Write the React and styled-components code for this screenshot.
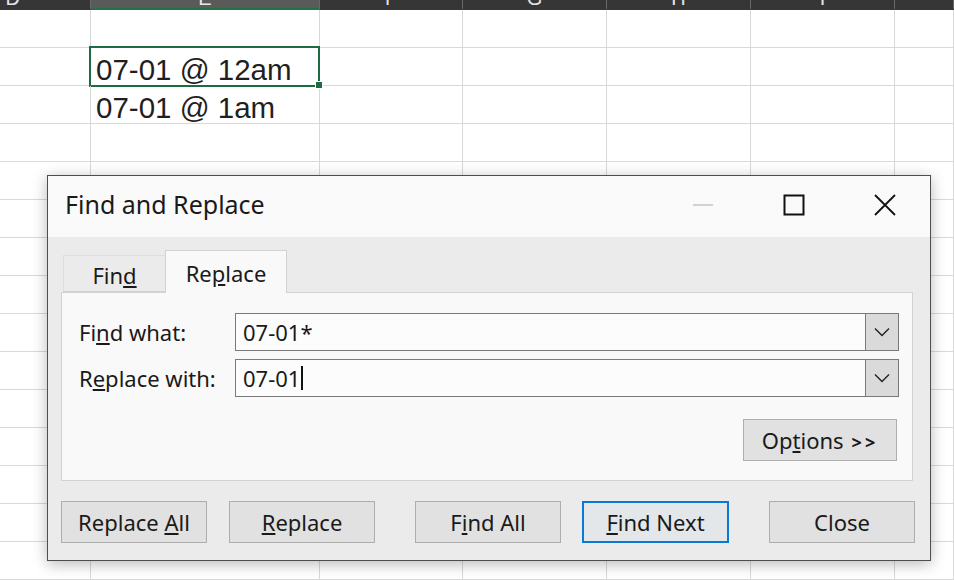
import React from 'react'
import styled, { createGlobalStyle } from 'styled-components'

const GlobalStyle = createGlobalStyle`
    html, body {
        margin: 0;
        padding: 0;
        background: #fff;
    }
`

const Page = styled.div`
    position: relative;
    width: 954px;
    height: 580px;
    overflow: hidden;
    background: #fff;
`

const Sheet = styled.div`
    display: grid;
    grid-template-columns: 91px 229px 143px 144px 144px 144px 59px;
    grid-template-rows: 10px repeat(15, 38px);
`

const HeadCell = styled.div`
    background: ${p => (p.active ? '#5a5a5a' : '#363636')};
    border-right: 1px solid #6a6a6a;
    border-bottom: 2px solid ${p => (p.active ? '#217346' : '#363636')};
    box-sizing: border-box;
    overflow: hidden;
    display: flex;
    align-items: flex-end;
    justify-content: ${p => (p.edge ? 'flex-end' : 'center')};
    padding-right: ${p => (p.edge ? '70px' : '0')};
    color: #e6e6e6;
    font-family: "Liberation Sans", Arial, sans-serif;
    font-size: 20px;
    line-height: 20px;
`

const Cell = styled.div`
    position: relative;
    box-sizing: border-box;
    border-right: 1px solid #d9d9d9;
    border-bottom: 1px solid #d9d9d9;
    display: flex;
    align-items: flex-end;
    padding: 0 0 0 5px;
    font-family: "Liberation Sans", Arial, sans-serif;
    font-size: 29.5px;
    line-height: 30px;
    color: #1f1f1f;
    white-space: nowrap;

    ${p => p.selected && `
        &::after {
            content: '';
            position: absolute;
            left: -2px;
            top: -2px;
            right: -1px;
            bottom: -2px;
            border: 2px solid #1e6b41;
        }
        &::before {
            content: '';
            position: absolute;
            right: -4px;
            bottom: -4px;
            width: 6px;
            height: 6px;
            background: #1e6b41;
            border: 1px solid #fff;
            z-index: 1;
        }
    `}
`

const Dialog = styled.div`
    position: absolute;
    left: 47px;
    top: 175px;
    width: 884px;
    height: 386px;
    box-sizing: border-box;
    border: 1px solid #4d4d4d;
    box-shadow: 0 3px 14px rgba(0, 0, 0, 0.28);
    display: flex;
    flex-direction: column;
    font-family: "Noto Sans", "Open Sans", sans-serif;
    color: #1a1a1a;
    z-index: 2;
`

const TitleBar = styled.div`
    height: 61px;
    background: #fafafa;
    display: flex;
    align-items: center;
    padding-left: 17px;
`

const Title = styled.div`
    flex: 1;
    font-size: 25px;
    padding-bottom: 5px;
    color: #1a1a1a;
`

const WinButton = styled.div`
    width: 91px;
    height: 61px;
    display: flex;
    align-items: center;
    justify-content: center;
    padding-bottom: 3px;
    box-sizing: border-box;
`

const Body = styled.div`
    flex: 1;
    background: #ebebeb;
    padding: 13px 15px 0 13px;
    display: flex;
    flex-direction: column;
`

const Tabs = styled.div`
    height: 42px;
    display: flex;
    align-items: flex-end;
    padding-left: 2px;
`

const Tab = styled.div`
    box-sizing: border-box;
    width: ${p => (p.active ? '122px' : '102px')};
    height: ${p => (p.active ? '43px' : '37px')};
    margin-bottom: ${p => (p.active ? '-1px' : '0')};
    background: ${p => (p.active ? '#f9f9f9' : '#ebebeb')};
    border: 1px solid ${p => (p.active ? '#d2d2d2' : '#dedede')};
    border-bottom: ${p => (p.active ? 'none' : '1px solid #d2d2d2')};
    border-right: ${p => (p.active ? '1px solid #d2d2d2' : 'none')};
    display: flex;
    align-items: center;
    justify-content: center;
    padding-top: ${p => (p.active ? '1px' : '2px')};
    font-size: 22px;
    position: relative;
    z-index: 1;
`

const Panel = styled.div`
    box-sizing: border-box;
    height: 189px;
    margin-right: 2px;
    background: #f9f9f9;
    border: 1px solid #d2d2d2;
    padding: 20px 13px 0 17px;
    display: flex;
    flex-direction: column;
    gap: 8px;
`

const FieldRow = styled.div`
    display: flex;
    align-items: center;
`

const Label = styled.div`
    width: 156px;
    font-size: 22px;
`

const Combo = styled.div`
    flex: 1;
    height: 38px;
    display: flex;
`

const ComboText = styled.div`
    flex: 1;
    box-sizing: border-box;
    border: 1px solid #7a7a7a;
    border-right: none;
    background: #fcfcfc;
    padding-left: 7px;
    display: flex;
    align-items: center;
    font-size: 22px;
`

const Caret = styled.span`
    display: inline-block;
    width: 2px;
    height: 24px;
    background: #111;
    margin-left: 1px;
`

const ComboButton = styled.div`
    width: 34px;
    box-sizing: border-box;
    border: 1px solid #7a7a7a;
    background: #dadada;
    display: flex;
    align-items: center;
    justify-content: center;
`

const OptionsRow = styled.div`
    display: flex;
    justify-content: flex-end;
    margin-top: 14px;
    padding-right: 2px;
`

const Button = styled.div`
    box-sizing: border-box;
    width: ${p => p.w || 146}px;
    height: 42px;
    margin-left: ${p => p.gap || 0}px;
    background: ${p => (p.primary ? '#e3e7ea' : '#e1e1e1')};
    border: ${p => (p.primary ? '2px solid #0a78d4' : '1px solid #adadad')};
    display: flex;
    align-items: center;
    justify-content: center;
    font-size: 22px;
    color: #1a1a1a;
    white-space: pre;
`

const ButtonRow = styled.div`
    display: flex;
    margin-top: 20px;
`

const Arrows = styled.span`
    letter-spacing: 3px;
    margin-left: 8px;
    font-size: 18px;
    font-weight: bold;
`

const Chevron = () => (
    <svg width="16" height="10" viewBox="0 0 16 10">
        <path d="M1 1.5 L8 8.5 L15 1.5" fill="none" stroke="#222" strokeWidth="1.4" />
    </svg>
)

const columns = ['D', 'E', 'F', 'G', 'H', 'I', '']

const cellText = (row, col) => {
    if (col !== 1) return ''
    if (row === 1) return '07-01 @ 12am'
    if (row === 2) return '07-01 @ 1am'
    return ''
}

const App = () => {
    const rows = Array.from({ length: 15 }, (_, r) =>
        columns.map((c, ci) => (
            <Cell key={`${r}-${ci}`} selected={r === 1 && ci === 1}>
                {cellText(r, ci)}
            </Cell>
        ))
    )

    return (
        <Page>
            <GlobalStyle />
            <Sheet>
                {columns.map((c, i) => (
                    <HeadCell key={c || 'x'} active={i === 1} edge={i === 0}>{c}</HeadCell>
                ))}
                {rows}
            </Sheet>

            <Dialog>
                <TitleBar>
                    <Title>Find and Replace</Title>
                    <WinButton>
                        <svg width="22" height="4" viewBox="0 0 22 4">
                            <line x1="1" y1="2" x2="21" y2="2" stroke="#c4c4c4" strokeWidth="1.5" />
                        </svg>
                    </WinButton>
                    <WinButton>
                        <svg width="22" height="22" viewBox="0 0 22 22">
                            <rect x="1.5" y="1.5" width="19" height="19" fill="none" stroke="#111" strokeWidth="2" />
                        </svg>
                    </WinButton>
                    <WinButton>
                        <svg width="22" height="22" viewBox="0 0 22 22">
                            <path d="M1 1 L21 21 M21 1 L1 21" stroke="#111" strokeWidth="1.8" />
                        </svg>
                    </WinButton>
                </TitleBar>
                <Body>
                    <Tabs>
                        <Tab><span>Fin<u>d</u></span></Tab>
                        <Tab active><span>Re<u>p</u>lace</span></Tab>
                    </Tabs>
                    <Panel>
                        <FieldRow>
                            <Label>Fi<u>n</u>d what:</Label>
                            <Combo>
                                <ComboText>07-01*</ComboText>
                                <ComboButton><Chevron /></ComboButton>
                            </Combo>
                        </FieldRow>
                        <FieldRow>
                            <Label>R<u>e</u>place with:</Label>
                            <Combo>
                                <ComboText>07-01<Caret /></ComboText>
                                <ComboButton><Chevron /></ComboButton>
                            </Combo>
                        </FieldRow>
                        <OptionsRow>
                            <Button w={154}><span>Op<u>t</u>ions<Arrows>&gt;&gt;</Arrows></span></Button>
                        </OptionsRow>
                    </Panel>
                    <ButtonRow>
                        <Button><span>Replace <u>A</u>ll</span></Button>
                        <Button gap={22}><span><u>R</u>eplace</span></Button>
                        <Button gap={40}><span>F<u>i</u>nd All</span></Button>
                        <Button gap={21} w={147} primary><span><u>F</u>ind Next</span></Button>
                        <Button gap={40}><span>Close</span></Button>
                    </ButtonRow>
                </Body>
            </Dialog>
        </Page>
    )
}

export default App
